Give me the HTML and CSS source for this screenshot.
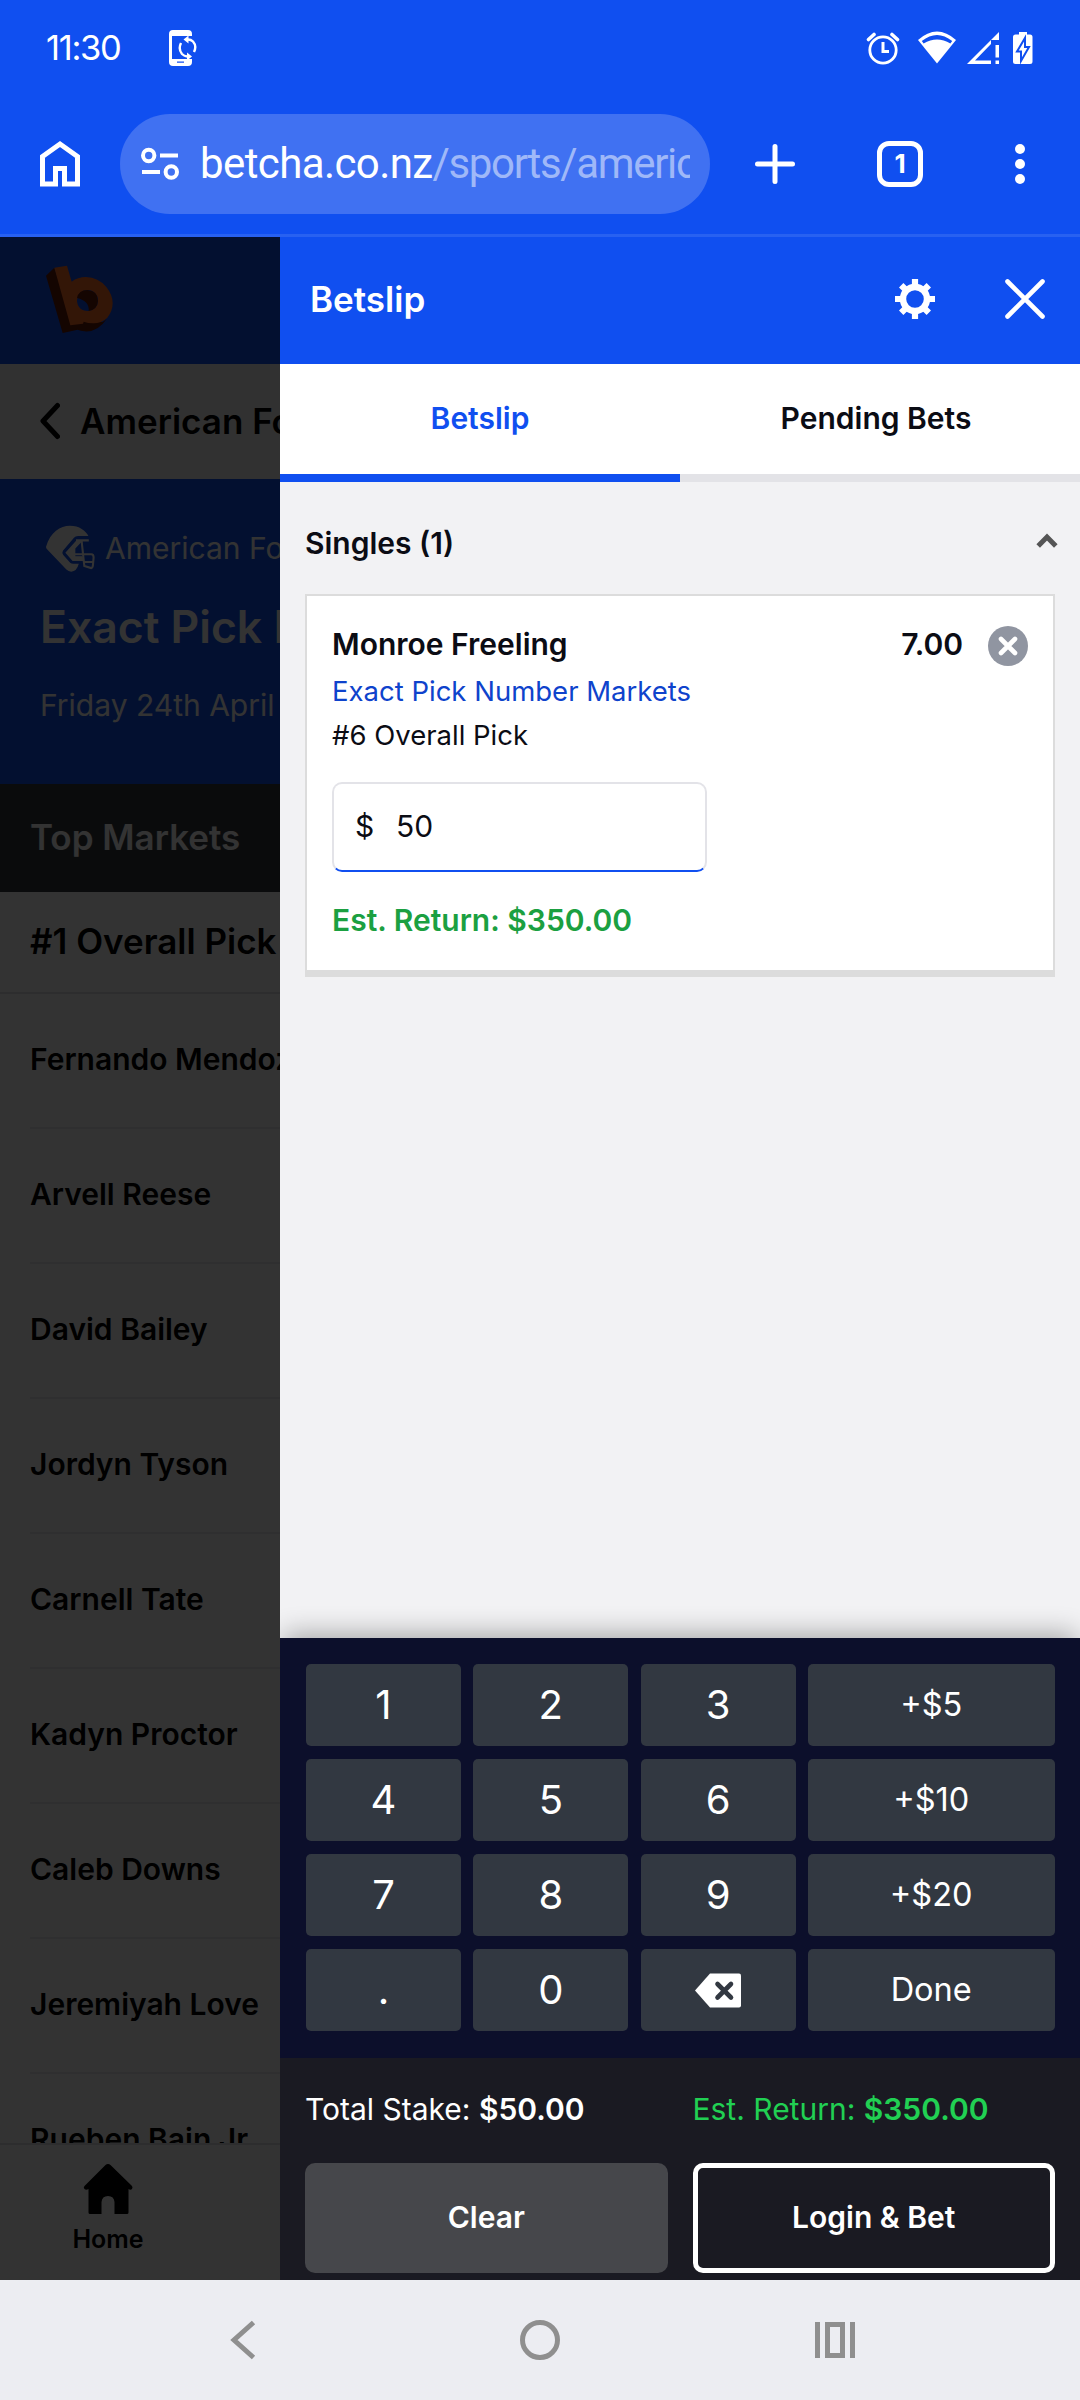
FILE: index.html
```
<!DOCTYPE html>
<html lang="en">
<head>
<meta charset="utf-8">
<title>Betslip</title>
<link rel="stylesheet" href="styles.css">
</head>
<body>
<div class="statusbar">
  <span class="clock">11:30</span>
  <svg class="sync" width="28" height="38" viewBox="0 0 28 38" fill="#fff"><path d="M4 1H19Q23 1 23 5V7H3V30H23V33Q23 37 19 37H4Q0 37 0 33V5Q0 1 4 1ZM8 32.600V33.800H15V32.600Z" fill-rule="evenodd"/><g fill="none" stroke="#fff" stroke-width="2.400"><path d="M12 14Q9 20 13 25Q15 27 18 27.500M25 23Q28 17 24 12.500Q22 10.500 19 10.500"/></g><path d="M19.500 6.500V14.500L14.500 10.500ZM18 23.500V31.500L23 27.500Z"/></svg>
  <svg class="alarm" width="34" height="34" viewBox="0 0 34 34" fill="none" stroke="#fff"><circle cx="17" cy="19" r="13.200" stroke-width="2.800"/><path d="M17 11V20.500H23" stroke-width="3"/><path d="M2.500 8.500 8 3.500M31.500 8.500 26 3.500" stroke-width="3.600" stroke-linecap="round"/></svg>
  <svg class="wifi" width="38" height="34" viewBox="0 0 38 34"><path d="M0 9Q19-8 38 9L19 32.500Z" fill="#fff"/><path d="M3.800 10Q19-2 34.200 10L32.400 12.400Q19 4.500 5.600 12.400Z" fill="#104ff0"/></svg>
  <svg class="signal" width="33" height="34" viewBox="0 0 33 34" fill="#fff"><path fill-rule="evenodd" d="M0 33 32 1V9H24V13L8 29.500H24V33Z"/><path d="M28.500 14H32V26.500H28.500ZM28.500 29.500H32V33H28.500Z"/></svg>
  <svg class="battery" width="20" height="34" viewBox="0 0 20 34"><path d="M6 1H14V3.500H17Q19.500 3.500 19.500 6V30.500Q19.500 33 17 33H2.500Q0 33 0 30.500V6Q0 3.500 2.500 3.500H6Z" fill="#fff"/><path d="M12 7V16H16L8 30V20.500H4Z" fill="#fff" stroke="#104ff0" stroke-width="2"/></svg>
</div>
<div class="toolbar">
  <svg class="home" width="42" height="48" viewBox="0 0 42 48"><path d="M3.500 44V16.500L21 4 38.500 16.500V44H25.500V28.500H16.500V44Z" fill="none" stroke="#fff" stroke-width="5"/></svg>
  <div class="address">
    <svg width="40" height="34" viewBox="0 0 40 34" fill="none" stroke="#fff" stroke-width="4"><circle cx="8.700" cy="8.500" r="5.700"/><circle cx="31.300" cy="25" r="5.700"/><path d="M20 8.500H38M2 25H20"/></svg>
    <div class="url">betcha.co.nz<span>/sports/americ</span></div>
  </div>
  <svg class="plus" width="40" height="40" viewBox="0 0 40 40"><path d="M20 2.500V37.500M2.500 20H37.500" stroke="#fff" stroke-width="5" stroke-linecap="round"/></svg>
  <div class="tabcount">1</div>
  <svg class="more" width="10" height="42" viewBox="0 0 10 42" fill="#fff"><circle cx="5" cy="6" r="5"/><circle cx="5" cy="21" r="5"/><circle cx="5" cy="36" r="5"/></svg>
</div>

<div class="viewport">
  <div class="page">
    <div class="sitehead">
      <svg width="68" height="70" viewBox="80 74 204 210"><path d="M80 106 105 82 160 240 250 245 262 236Q235 276 196 273Q184 272 175 268L130 278Z" fill="#661a05"/><path fill-rule="evenodd" d="M105 82 143 76 157 124Q175 110 200 110Q237 111 261 140Q280 164 280 188Q280 212 264 232Q246 249 222 249Q206 249 193 244L191 250 153 255ZM204 149A31 31 0 0 0 173 180A31 31 0 0 0 208 212A31 31 0 0 0 236 182A31 31 0 0 0 204 149Z" fill="#ff6d26"/><path d="M173 173Q178 149 204 149Q236 151 236 182Q234 208 208 212Q211 182 173 173Z" fill="#661a05"/></svg>
    </div>
    <div class="crumb">
      <svg width="20" height="38" viewBox="0 0 20 38"><path d="M17.500 3.500 3 19 17.500 34.500" fill="none" stroke="#000" stroke-width="5" stroke-linecap="round" stroke-linejoin="round"/></svg>
      <span>American Football</span>
    </div>
    <div class="hero">
      <div class="sport">
        <svg width="50" height="47" viewBox="0 0 145 132" preserveAspectRatio="none"><path fill="#fff" d="M3 61C15 20 45 2 72 2C100 2 118 16 126 31H96Q88 31 84 36L52 72Q48 79 53 84L73 106Q76 109 82 109H98Q92 131 76 131Q68 131 62 125L8 70Q2 65 3 61ZM59 78 92 42 107 46 88 66V88H108L112 101H80Z"/><path fill="none" stroke="#fff" stroke-width="6" d="M90 43H127M106 43 114 115 134 121Q138 121 139 113L141 91Q141 82 134 82H84M84 92H108M114 104H140"/></svg>
        <span>American Football</span>
      </div>
      <div class="event">Exact Pick Number Markets</div>
      <div class="date">Friday 24th April</div>
    </div>
    <div class="group">Top Markets</div>
    <div class="market">#1 Overall Pick</div>
    <div class="runners">
      <div class="runner">Fernando Mendoza</div>
      <div class="runner">Arvell Reese</div>
      <div class="runner">David Bailey</div>
      <div class="runner">Jordyn Tyson</div>
      <div class="runner">Carnell Tate</div>
      <div class="runner">Kadyn Proctor</div>
      <div class="runner">Caleb Downs</div>
      <div class="runner">Jeremiyah Love</div>
      <div class="runner">Rueben Bain Jr.</div>
    </div>
    <div class="bottomnav">
      <div class="navitem">
        <svg width="50" height="52" viewBox="0 0 50 52"><path d="M25 1Q26.500 1 27.500 2L49 23Q50 24.500 49 26Q47.500 27.500 45.500 26V49.500Q45.500 51 44 51H31.500V39Q31 33 25 33Q19 33 18.500 39V51H7Q5.500 51 5.500 49.500V26Q3 27.500 1.500 26Q0 24.500 1.500 23L22.500 2Q23.500 1 25 1Z" fill="#000"/></svg>
        <span>Home</span>
      </div>
    </div>
  </div>
  <div class="scrim"></div>

  <div class="drawer">
    <div class="drawerhead">
      <span>Betslip</span>
      <svg class="gear" width="40" height="40" viewBox="0 0 40 40" fill="none" stroke="#fff"><circle cx="20" cy="20" r="12" stroke-width="6.400"/><g stroke-width="6.200"><path d="M20 0V7M20 33V40M0 20H7M33 20H40M6.200 6.200 11 11M29 29 33.800 33.800M6.200 33.800 11 29M29 11 33.800 6.200"/></g></svg>
      <svg width="40" height="40" viewBox="0 0 40 40"><path d="M2.500 2.500 37.500 37.500M37.500 2.500 2.500 37.500" stroke="#fff" stroke-width="4.600" stroke-linecap="round"/></svg>
    </div>
    <div class="tabs">
      <div class="tab active">Betslip</div>
      <div class="tab">Pending Bets</div>
    </div>
    <div class="slip">
      <div class="singles">
        <span>Singles (1)</span>
        <svg width="22" height="16" viewBox="0 0 22 16"><path d="M2.200 13 11 4 19.800 13" fill="none" stroke="#555" stroke-width="5"/></svg>
      </div>
      <div class="bet">
        <div class="bethead">
          <span class="name">Monroe Freeling</span>
          <span class="odds">7.00</span>
          <svg width="40" height="40" viewBox="0 0 40 40"><circle cx="20" cy="20" r="20" fill="#9095a1"/><path d="M13 13 27 27M27 13 13 27" stroke="#fff" stroke-width="4.600" stroke-linecap="round"/></svg>
        </div>
        <div class="marketname">Exact Pick Number Markets</div>
        <div class="pick">#6 Overall Pick</div>
        <div class="stake"><span class="currency">$</span><span>50</span></div>
        <div class="return">Est. Return: $350.00</div>
      </div>
    </div>
    <div class="keypad">
      <div class="key">1</div><div class="key">2</div><div class="key">3</div><div class="key wide">+$5</div>
      <div class="key">4</div><div class="key">5</div><div class="key">6</div><div class="key wide">+$10</div>
      <div class="key">7</div><div class="key">8</div><div class="key">9</div><div class="key wide">+$20</div>
      <div class="key">.</div><div class="key">0</div>
      <div class="key"><svg width="46" height="35" viewBox="0 0 46 35"><path d="M0 17.500 15 .500H44Q46 .500 46 2.500V32.500Q46 34.500 44 34.500H15Z" fill="#fff"/><path d="M22.500 11 36 24.500M36 11 22.500 24.500" stroke="#323841" stroke-width="4.600" stroke-linecap="round"/></svg></div>
      <div class="key wide">Done</div>
    </div>
    <div class="summary">
      <div class="total">Total Stake: <b>$50.00</b></div>
      <div class="total green">Est. Return: <b>$350.00</b></div>
      <div class="button clear">Clear</div>
      <div class="button login">Login &amp; Bet</div>
    </div>
  </div>
</div>

<div class="sysnav">
  <svg width="26" height="40" viewBox="0 0 26 40"><path d="M23.500 2.500 4 20 23.500 37.500" fill="none" stroke="#8f8f8f" stroke-width="5"/></svg>
  <svg width="40" height="40" viewBox="0 0 40 40"><circle cx="20" cy="20" r="17.500" fill="none" stroke="#8f8f8f" stroke-width="5"/></svg>
  <svg width="40" height="36" viewBox="0 0 40 36"><path d="M2.500 0V36M37.500 0V36M12.500 2.500H27.500V33.500H12.500Z" fill="none" stroke="#8f8f8f" stroke-width="5"/></svg>
</div>
</body>
</html>
```
FILE: styles.css
```
* { box-sizing: border-box; }
body {
  margin: 0;
  width: 1080px;
  height: 2400px;
  overflow: hidden;
  font: 400 30px/36px Inter, sans-serif;
  color: #0b0c14;
  white-space: nowrap;
}
svg { display: block; flex: none; }

/* Status bar and browser toolbar */
.statusbar {
  display: flex;
  align-items: center;
  height: 95px;
  padding-left: 46px;
  background: #104ff0;
  color: #fff;
}
.clock { width: 123px; font-size: 34.5px; letter-spacing: -1.3px; }
.sync { margin-right: 669px; }
.alarm { margin-right: 18px; }
.wifi { margin-right: 11px; }
.signal { margin-right: 13px; }
.toolbar {
  display: flex;
  align-items: center;
  height: 142px;
  padding: 0 0 2px 39px;
  background: #104ff0;
  border-bottom: 3px solid #2861f1;
}
.address {
  display: flex;
  align-items: center;
  width: 590px;
  height: 100px;
  margin: 0 45px 0 39px;
  padding: 0 20px;
  border-radius: 50px;
  background: #4071f2;
}
.url {
  margin-left: 20px;
  width: 490px;
  overflow: hidden;
  font: 400 42px/50px Roboto, sans-serif;
  letter-spacing: -0.6px;
  color: #fff;
}
.url span { color: #9fb8f8; letter-spacing: -1.35px; }
.tabcount {
  width: 46px;
  height: 46px;
  margin: 0 92px 0 82px;
  border: 5px solid #fff;
  border-radius: 12px;
  color: #fff;
  font: 700 26px/36px Inter, sans-serif;
  text-align: center;
}

.viewport { position: relative; height: 2043px; overflow: hidden; }

/* Page behind the drawer */
.page { display: flex; flex-direction: column; height: 2043px; background: #fff; color: #000; }
.sitehead { flex: none; height: 127px; padding: 28px 0 0 46px; background: #104ff0; }
.crumb {
  display: flex;
  flex: none;
  align-items: center;
  height: 115px;
  padding: 0 0 2px 40px;
  background: #f2f2f4;
  font-size: 35px;
  font-weight: 600;
}
.crumb span { margin-left: 20px; }
.hero { flex: none; height: 305px; padding: 46px 0 0 40px; background: #104ff0; color: #fff; }
.sport { display: flex; align-items: center; height: 47px; padding-left: 5px; }
.sport span { margin: -2px 0 0 10px; }
.event { margin-top: 28px; font-size: 44.5px; font-weight: 600; line-height: 54px; }
.date { margin-top: 33px; }
.group {
  flex: none;
  height: 108px;
  padding-left: 30px;
  background: #35373f;
  color: #fff;
  font-size: 35px;
  font-weight: 600;
  line-height: 107px;
}
.market {
  flex: none;
  height: 102px;
  padding-left: 30px;
  border-bottom: 2px solid #e2e2e7;
  font-size: 35px;
  font-weight: 600;
  line-height: 99px;
}
.runners { flex: 1; min-height: 0; overflow: hidden; padding-left: 30px; }
.runner { height: 135px; border-bottom: 2px solid #ececf0; font-weight: 600; line-height: 131px; }
.bottomnav { flex: none; height: 137px; border-top: 2px solid #e2e2e7; background: #fff; }
.navitem {
  display: flex;
  flex-direction: column;
  align-items: center;
  width: 216px;
  padding-top: 18px;
  font-size: 25px;
  font-weight: 600;
}
.navitem span { margin-top: 6px; }
.scrim { position: absolute; inset: 0; background: rgba(0, 0, 0, 0.8); }

/* Betslip drawer */
.drawer {
  position: absolute;
  top: 0;
  right: 0;
  bottom: 0;
  width: 800px;
  display: flex;
  flex-direction: column;
  overflow: hidden;
  background: #f2f2f4;
}
.drawerhead {
  display: flex;
  align-items: center;
  height: 127px;
  padding: 0 35px 3px 30px;
  background: #104ff0;
  color: #fff;
  font-size: 35px;
  font-weight: 600;
}
.drawerhead span { flex: 1; margin-top: -1px; }
.gear { margin-right: 70px; }
.tabs { display: grid; grid-template-columns: 400px 400px; height: 118px; background: #fff; }
.tab {
  border-bottom: 8px solid #e3e3e7;
  font-weight: 600;
  line-height: 108px;
  text-align: center;
}
.tab:last-child { padding-right: 8px; }
.tab.active { border-color: #104ff0; color: #104ff0; }
.slip { flex: 1; padding: 0 25px; }
.singles {
  display: flex;
  align-items: center;
  justify-content: space-between;
  height: 112px;
  margin-right: -3px;
  padding-top: 10px;
  font-weight: 600;
}
.singles svg { margin-top: -4px; }
.bet {
  height: 383px;
  padding: 30px 25px 0;
  border: 2px solid #dcdcdc;
  border-bottom-width: 7px;
  background: #fff;
}
.bethead { display: flex; align-items: center; height: 40px; font-weight: 600; }
.name { flex: 1; }
.name, .odds { margin-top: -5px; }
.odds { margin-right: 25px; }
.marketname { margin-top: 7px; color: #0e43cc; font-size: 27.5px; }
.pick { margin-top: 8px; font-size: 27.5px; }
.stake {
  display: flex;
  align-items: center;
  width: 375px;
  height: 90px;
  margin-top: 29px;
  padding: 0 21px 2px;
  border: 2px solid #e3e3e8;
  border-bottom-color: #104ff0;
  border-radius: 10px;
}
.currency { width: 41px; }
.return { margin-top: 30px; color: #1ba041; font-weight: 600; }
.keypad {
  display: grid;
  grid-template-columns: 155px 155px 155px 1fr;
  grid-auto-rows: 82px;
  gap: 13px 12.3px;
  height: 420px;
  padding: 26px 25.5px 0 26px;
  background: #0c0f2b;
  box-shadow: 0 -8px 25px -4px rgba(0, 0, 0, 0.32);
}
.key {
  display: flex;
  align-items: center;
  justify-content: center;
  border-radius: 5px;
  background: #323841;
  color: #fff;
  font-size: 40px;
}
.key.wide { font-size: 32.5px; }
.summary {
  display: grid;
  grid-template-columns: 1fr 1fr;
  grid-template-rows: 36px 110px;
  gap: 36px 25px;
  height: 222px;
  padding: 33px 25px 0;
  background: #1a1a22;
}
.total { color: #fff; }
.total.green { color: #21d053; }
.total b { font-weight: 600; }
.button {
  border-radius: 10px;
  color: #fff;
  font-weight: 600;
  line-height: 109px;
  text-align: center;
}
.clear { background: #46474b; }
.login { border: 5px solid #fff; line-height: 99px; }

/* System navigation */
.sysnav {
  display: grid;
  grid-template-columns: 26px 40px 40px;
  align-items: center;
  justify-content: start;
  column-gap: 264px;
  height: 120px;
  padding-left: 230px;
  background: #ecedf2;
}
.sysnav svg:last-child { margin-left: -9px; }
```
